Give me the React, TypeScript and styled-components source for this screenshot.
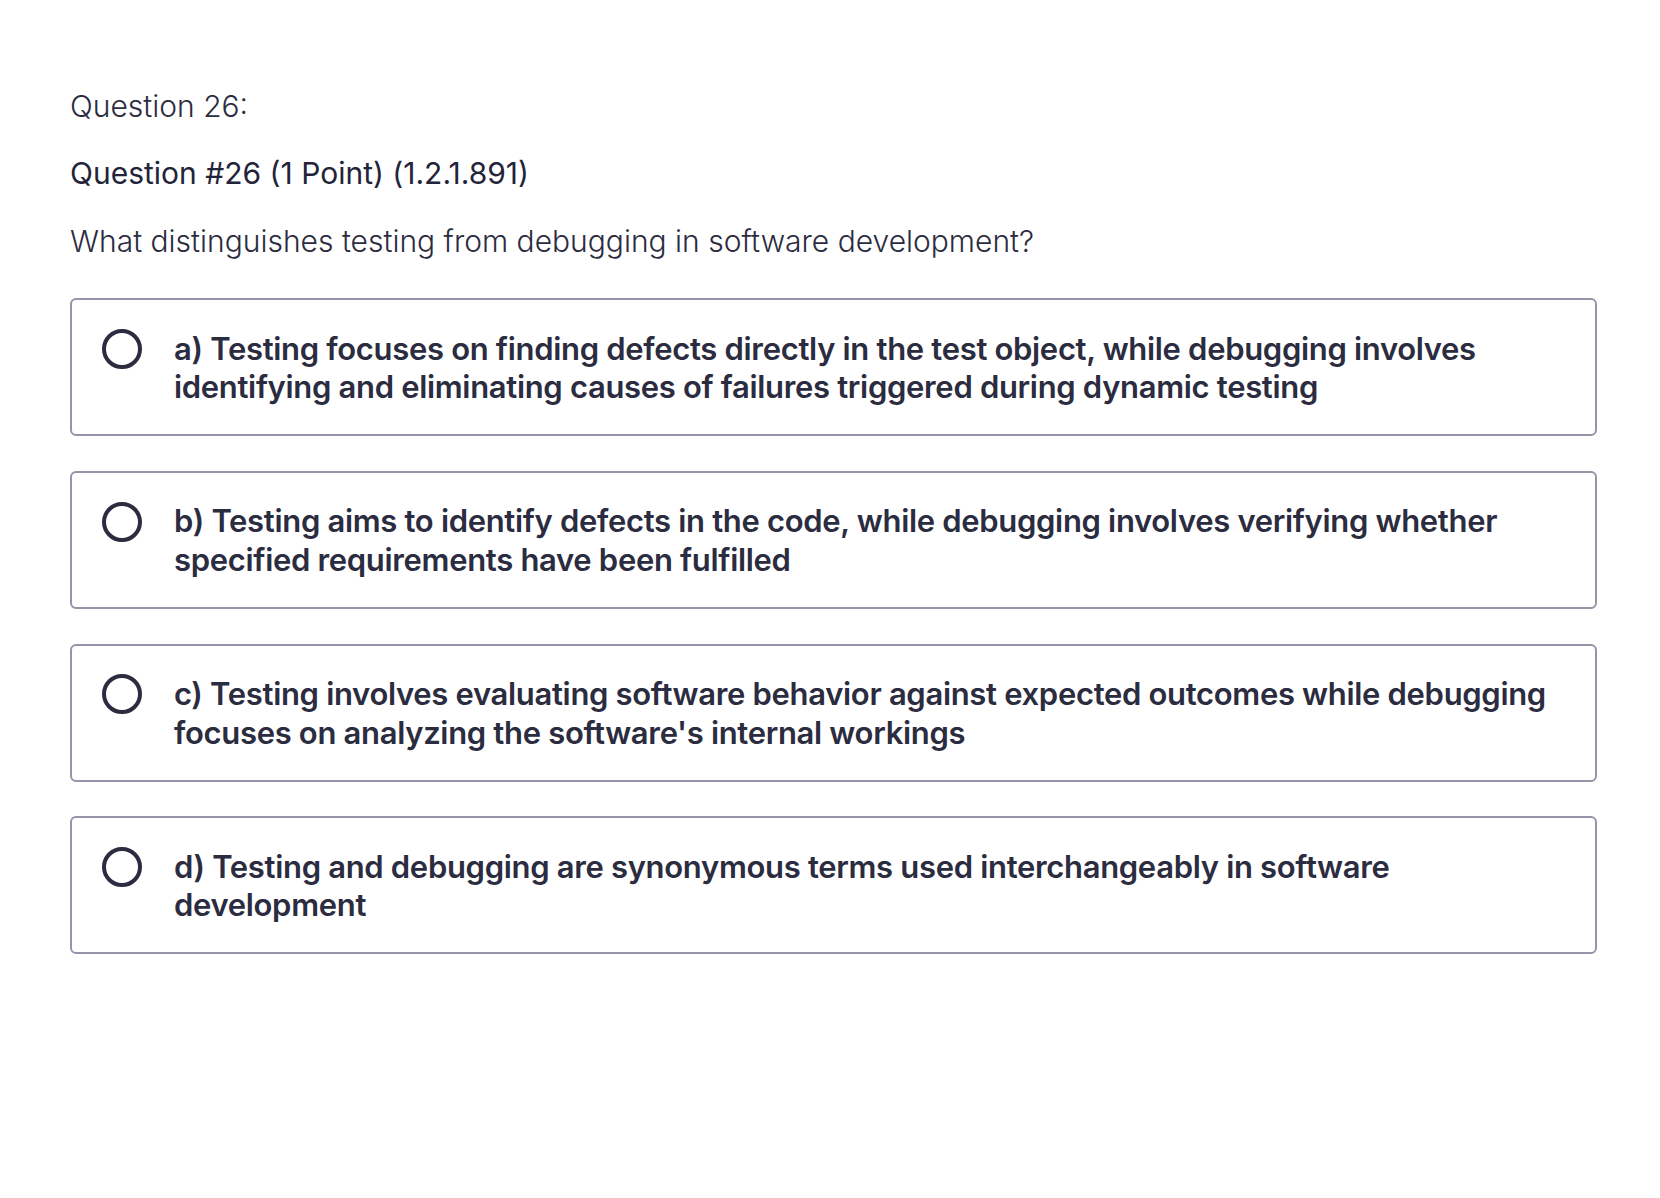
import React from "react";
import styled, { createGlobalStyle } from "styled-components";

const GlobalStyle = createGlobalStyle`
  body {
    margin: 0;
    background: #ffffff;
    font-family: Inter, "Noto Sans", sans-serif;
    color: #2b2c40;
  }
`;

const Page = styled.main`
  padding: 86px 63px 0 70px;
`;

const Heading = styled.div`
  font-size: 30px;
  font-weight: 300;
  line-height: 40px;
  margin-bottom: 27px;
`;

const Title = styled.div`
  font-size: 30px;
  font-weight: 400;
  line-height: 40px;
  color: #23243a;
  margin-bottom: 28px;
`;

const Prompt = styled.p`
  font-size: 30px;
  font-weight: 300;
  line-height: 40px;
  margin: 0 0 37px;
`;

const Options = styled.div`
  display: flex;
  flex-direction: column;
  gap: 34.8px;
`;

const Option = styled.label`
  display: flex;
  align-items: flex-start;
  gap: 32px;
  padding: 29.5px 32px 27.5px 30px;
  border: 2px solid #9495a9;
  border-radius: 6px;
  cursor: pointer;
`;

const Radio = styled.span`
  flex: none;
  width: 32px;
  height: 32px;
  margin-top: -0.75px;
  border: 4px solid #2b2c40;
  border-radius: 50%;
`;

const OptionText = styled.span`
  font-size: 31px;
  font-weight: 600;
  line-height: 38.5px;
  letter-spacing: -0.32px;
  color: #2b2c40;
`;

const answers = [
  "a) Testing focuses on finding defects directly in the test object, while debugging involves identifying and eliminating causes of failures triggered during dynamic testing",
  "b) Testing aims to identify defects in the code, while debugging involves verifying whether specified requirements have been fulfilled",
  "c) Testing involves evaluating software behavior against expected outcomes while debugging focuses on analyzing the software's internal workings",
  "d) Testing and debugging are synonymous terms used interchangeably in software development",
];

export default function App() {
  return (
    <>
      <GlobalStyle />
      <Page>
        <Heading>Question 26:</Heading>
        <Title>Question #26 (1 Point) (1.2.1.891)</Title>
        <Prompt>What distinguishes testing from debugging in software development?</Prompt>
        <Options>
          {answers.map((a) => (
            <Option key={a}>
              <Radio />
              <OptionText>{a}</OptionText>
            </Option>
          ))}
        </Options>
      </Page>
    </>
  );
}
